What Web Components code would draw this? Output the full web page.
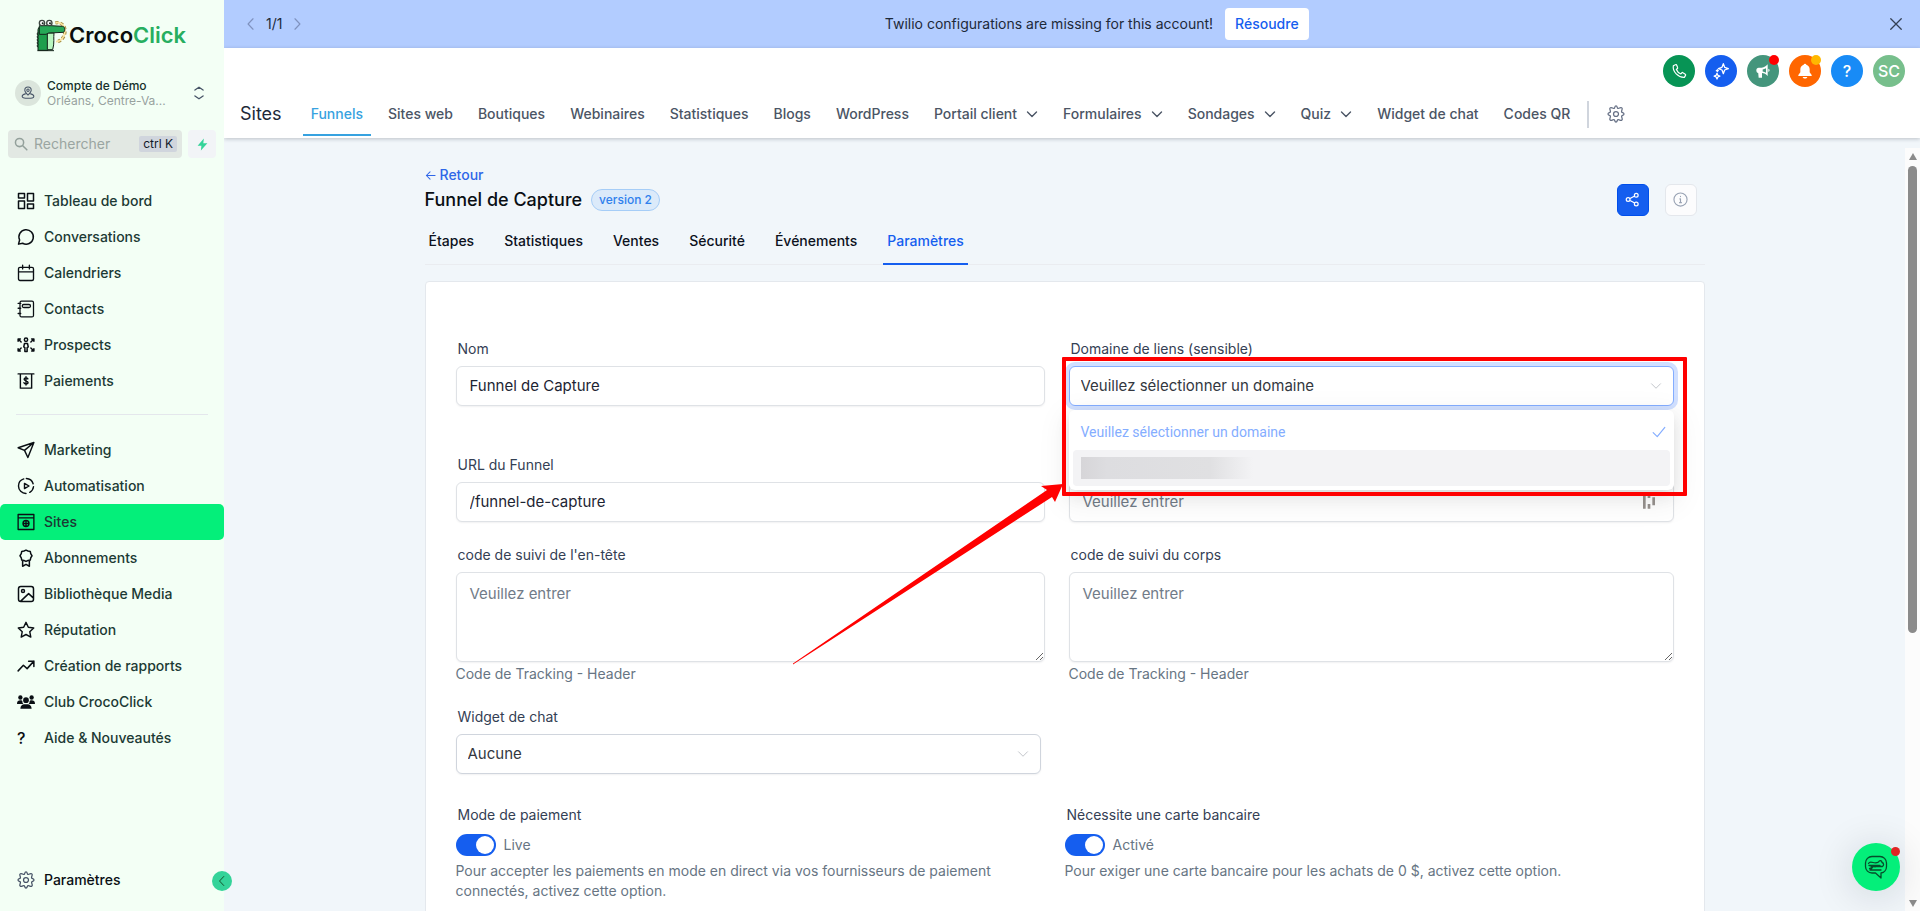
<!DOCTYPE html>
<html lang="fr">
<head>
<meta charset="utf-8">
<meta name="viewport" content="width=device-width, initial-scale=1">
<title>Funnel de Capture</title>
<style>
body {
  margin: 0;
  font-family: Inter, "Open Sans", sans-serif;
  font-size: 14px;
  line-height: 20px;
  color: #101828;
}
</style>
</head>
<body>
<funnel-app></funnel-app>

<script>
var stroke = (d, w = 2) => `<g fill="none" stroke="currentColor" stroke-width="${w}" stroke-linecap="round" stroke-linejoin="round">${d}</g>`;
var path = (d, w) => stroke(`<path d="${d}"/>`, w);

// all on a 24x24 grid
var icons = {
  dashboard: stroke(`<rect x="2" y="2" width="8" height="6"/><rect x="14" y="2" width="8" height="10"/><rect x="2" y="12" width="8" height="10"/><rect x="14" y="16" width="8" height="6"/>`),
  chat: path('M2 21.500l1.500-5.500A9.600 9.600 0 1 1 7.500 20.300z'),
  calendar: path('M4 4.500h16a2 2 0 0 1 2 2V20a2 2 0 0 1-2 2H4a2 2 0 0 1-2-2V6.500a2 2 0 0 1 2-2zM2 10.500h20M7.500 1.500v5M16.500 1.500v5', 1.800),
  contacts: path('M6 1.500h14a2 2 0 0 1 2 2v17a2 2 0 0 1-2 2H6a2 2 0 0 1-2-2v-17a2 2 0 0 1 2-2zM1.500 4.500H5M1.500 11H5M1.500 18H5M9 6h7a1.500 1.500 0 0 1 0 4H9a1.500 1.500 0 0 1 0-4z', 1.700),
  prospects: stroke(`<circle cx="12" cy="5" r="2.200"/><path d="M10 10h4l1 4.500-1.500 1v5h-3v-5l-1.500-1z"/><path d="M1.500 7V4h3M1.500 4l4 4M22.500 7V4h-3M22.500 4l-4 4M1.500 17v3h3M1.500 20l4-4M22.500 17v3h-3M22.500 20l-4-4"/>`, 2),
  payments: path('M1.500 2.500h21M4.500 2.500v19h15v-19M14.500 9.200c-.5-1-1.400-1.400-2.500-1.400-1.500 0-2.500.7-2.500 1.900 0 2.800 5.200 1.300 5.200 4.200 0 1.200-1.100 1.900-2.700 1.900-1.300 0-2.300-.5-2.700-1.500M12 6.300v11', 1.900),
  send: path('M22.500 2L10 12.500M22.500 2l-8 20-4.500-9.500L1.500 9z', 1.900),
  automation: path('M9 2.500A10 10 0 0 0 2 12a10 10 0 0 0 10 10M12.500 2a10 10 0 0 1 9 7M22 13a10 10 0 0 1-5 7.500M10 8.500v7l6-3.500z', 1.900),
  sites: path('M1.500 2h21v20h-21zM1.500 6.500h21M12 10a4 4 0 1 1 0 8 4 4 0 0 1 0-8zM8 14h8M12 10v8', 1.800),
  award: path('M12 1.500l2.700 1.200 3 .6.600 3L20 9l-1.700 2.700-.6 3-3 .6L12 16.500l-2.700-1.200-3-.6-.6-3L4 9l1.700-2.700.6-3 3-.6zM7.500 15.500V23l4.500-2.500 4.500 2.500v-7.500', 2),
  image: path('M5 2h14a3 3 0 0 1 3 3v14a3 3 0 0 1-3 3H5a3 3 0 0 1-3-3V5a3 3 0 0 1 3-3zM8 6a2 2 0 1 1 0 4 2 2 0 0 1 0-4zM5 21.500l10.500-10 6.500 6', 2),
  star: path('M12 1.800l3.100 6.600 7.200.9-5.300 5 1.400 7.200L12 18l-6.400 3.500L7 14.300l-5.300-5 7.200-.9z', 1.900),
  trend: path('M1.500 18.500l7-7.500 5 4.500 9-10M15.500 5.500h7v7', 2),
  group: `<g fill="currentColor"><circle cx="12" cy="9.500" r="3.800"/><circle cx="4.500" cy="6" r="2.900"/><circle cx="19.500" cy="6" r="2.900"/><path d="M4.500 21c0-4 2.500-6 5-6h5c2.500 0 5 2 5 6zM0 14.500C0 11 2 9.800 4.500 9.800c1 0 1.900.2 2.600.7-.1 1.600.4 2.900 1.400 4zM24 14.500c0-3.500-2-4.700-4.500-4.700-1 0-1.900.2-2.600.7.1 1.600-.4 2.900-1.400 4z"/></g>`,
  gear: path('M12 8.700a3.300 3.300 0 1 1 0 6.600 3.300 3.300 0 0 1 0-6.600zM9.900 4.300c.5-1.500.8-3 2.100-3s1.600 1.500 2.100 3c1.300.5 1.600.3 3-.4 1.200-.6 2-.8 2.700-.1s.7 1.600.1 2.800c-.7 1.400-.8 1.800-.3 3 1.600.6 3.100.9 3.100 2.300s-1.500 1.800-3 2.400c-.5 1.200-.4 1.600.3 3 .6 1.200.6 2-.1 2.700s-1.600.7-2.800.1c-1.400-.7-1.700-.8-3-.3-.5 1.500-.8 3-2.100 3s-1.600-1.500-2.100-3c-1.300-.5-1.600-.4-3 .3-1.200.6-2 .6-2.700-.1s-.7-1.500-.1-2.700c.7-1.400.8-1.800.3-3-1.500-.6-3.100-1-3.100-2.400s1.500-1.700 3.100-2.300c.5-1.200.4-1.600-.3-3-.6-1.200-.6-2.100.1-2.800s1.500-.5 2.700.1c1.400.7 1.700.9 3 .4z', 1.700),
  person: path('M12 15.500C8.500 12 6.500 10 6.500 7.200a5.500 5.500 0 0 1 11 0c0 2.800-2 4.800-5.500 8.300zM12 5.300a2 2 0 1 1 0 4 2 2 0 0 1 0-4zM7.500 13.500C4 14.200 2 15.800 2 18c0 2.500 3.500 3 10 3s10-.5 10-3c0-2.200-2-3.800-5.500-4.500', 1.800),
  updown: path('M5 7l7-5 7 5M5 17l7 5 7-5', 2.200),
  search: stroke(`<circle cx="9.500" cy="9.500" r="7"/><path d="M15 15l7 7"/>`, 2.600),
  bolt: `<path fill="currentColor" d="M14.500 1L3 14.500h7L9 23l12-13.500h-7.500z"/>`,
  left: path('M15.500 3L7 12l8.500 9'),
  right: path('M8.500 3l8.500 9-8.500 9'),
  down: path('M3 8l9 9 9-9', 2.800),
  thindown: path('M3 7.500l9 9 9-9', 1.600),
  close: path('M3 3l18 18M21 3L3 21', 2.200),
  back: path('M22 12H3M11 4l-8 8 8 8', 2.200),
  check: path('M2 13l7 7L22 4', 2),
  phone: path('M6.500 2.500L3.500 4c-1.500 9 7.500 18 16.500 17.500l1.800-3c.4-.7.2-1.400-.4-1.800l-3.500-2.200c-.6-.4-1.300-.3-1.700.2l-1.400 1.700C12 15.200 9 12.200 8 9.700L9.600 8.200c.5-.4.600-1 .3-1.600L8.400 3c-.3-.7-1.200-.9-1.900-.5z', 1.800),
  sparkle: path('M15.500 1l2 5.500L23 8.500l-5.500 2-2 5.500-2-5.500L8 8.500l5.500-2zM6.500 10v3M5 11.500h3M6 15.500l1.300 3 3 1.300-3 1.200L6 24l-1.300-3-3-1.200 3-1.300z', 1.900),
  horn: `<path fill="currentColor" fill-rule="evenodd" d="M19 2v17.500c-2.500-3-5-4.300-8.500-4.500V22H5.500l-.7-7C3 14.800 2 13.500 2 11s1.300-4 3.500-4H10c4-.2 6.500-2 9-5zM16.500 8c-1.700 1-3.500 1.700-5 1.900v2.700c1.700.2 3.400.9 5 1.900zM20 8.500a2.600 2.600 0 0 1 0 5z"/>`,
  bell: `<path fill="currentColor" d="M12 1a2 2 0 0 0-2 1.500C7 3.300 5 6 5 9.500V14l-3 4v1.500h20V18l-3-4V9.500c0-3.500-2-6.200-5-7A2 2 0 0 0 12 1zM8.500 21c.5 1.500 2 2.300 3.500 2.300s3-.8 3.500-2.300z"/>`,
  share: path('M18 2a3 3 0 1 1 0 6 3 3 0 0 1 0-6zM5 9a3 3 0 1 1 0 6 3 3 0 0 1 0-6zM18 16a3 3 0 1 1 0 6 3 3 0 0 1 0-6zM8 10.500L15.500 6.500M8 13.500l7.500 4'),
  info: path('M12 1.500a10.500 10.500 0 1 1 0 21 10.500 10.500 0 0 1 0-21zM12 11v6M11 11h1M10.500 17h3M12 7v.3', 1.800),
  bars: `<path fill="currentColor" d="M3 2h4v20H3zM10 2h4v4h-4zM10 15h4v7h-4zM17 5h4v12h-4z"/>`,
  croco: path('M8 1.500h8A6.500 6.500 0 0 1 22.500 8v3.500A6.500 6.500 0 0 1 17 18v5l-5.500-5H8a6.500 6.500 0 0 1-6.500-6.500V8A6.500 6.500 0 0 1 8 1.500zM4.500 8.500c1-2 3-1.500 4.500-1 1.500.5 4 .5 5.500-.5 1-2 3.500-1.500 3.500.5 2 .5 2 3 .5 4H9l-1.500 2H5.500M5 10.500h11M7 12l1-1.500 1 1.500 1-1.500 1 1.500M6 15h11', 1.300)
};

var define = (name, css, html, setup) => {
  let template = document.createElement("template");
  template.innerHTML = `<style>*{box-sizing:border-box}${css}</style>${html}`;
  customElements.define(name, class extends HTMLElement {
    constructor() {
      super();
      this.attachShadow({ mode: 'open' }).appendChild(template.content.cloneNode(true));
    }
    connectedCallback() {
      if (setup) setup(this, (s) => this.shadowRoot.querySelector(s));
    }
  });
};

define('app-icon', `
:host { display: block; flex: none; width: var(--size, 18px); height: var(--size, 18px); }
svg { display: block; width: 100%; height: 100%; overflow: visible; }
`, `<svg viewBox="0 0 24 24" aria-hidden="true"></svg>`, (el, $) => {
  $('svg').innerHTML = icons[el.getAttribute('name')];
});

/* sidebar */

define('side-link', `
:host { display: block; }
a {
  display: flex;
  align-items: center;
  gap: 9px;
  height: 36px;
  padding: 0 17px;
  border-radius: 5px;
  color: #1c3a34;
  font-size: 14px;
  font-weight: 500;
  text-decoration: none;
}
:host([active]) a { background: #04ef7a; }
:host([plain]) a { color: #0a0f14; }
:host([plain]) app-icon { color: #475467; }
app-icon { color: #0a0f14; }
.mark { width: 18px; font-size: 16px; color: #0a0f14; }
`, `<a href="#"><slot name="icon"></slot><slot></slot></a>`, (el, $) => {
  if (el.hasAttribute('icon')) $('slot').outerHTML = `<app-icon name="${el.getAttribute('icon')}"></app-icon>`;
  else $('slot').outerHTML = `<span class="mark">?</span>`;
});

define('croco-logo', `
:host { display: flex; align-items: center; gap: 1px; height: 36px; font-size: 22px; font-weight: 600; line-height: 28px; color: #0b0f0d; }
svg { width: 32px; height: 34px; }
span { color: #27ae60; }
`, `
<svg viewBox="0 0 96 100" aria-hidden="true">
  <g fill="none">
    <path d="M58 14c16-5 29 8 29 24S76 70 60 70" stroke="#a08a3c" stroke-width="10" stroke-dasharray="9 6"/>
    <path d="M58 14c16-5 29 8 29 24S76 70 60 70" stroke="#fbe3a0" stroke-width="5"/>
  </g>
  <path d="M8 28h42l-2 16H36v52H6V34z" fill="#1e9e4c" stroke="#14241b" stroke-width="3"/>
  <path d="M34 44h20c-2 14 2 30-4 50H34z" fill="#b9f7c0" stroke="#14241b" stroke-width="3"/>
  <path d="M10 22h34l36 2c8 1 8 16 2 18l-44 2-8 4H10z" fill="#27a857" stroke="#14241b" stroke-width="3"/>
  <circle cx="18" cy="14" r="8" fill="#fff" stroke="#3c4540" stroke-width="4"/>
  <circle cx="40" cy="14" r="8" fill="#fff" stroke="#3c4540" stroke-width="4"/>
  <circle cx="20" cy="15" r="3" fill="#14241b"/>
  <circle cx="42" cy="15" r="3" fill="#14241b"/>
  <path d="M6 42l-3 5 3 4-3 5 3 4-3 5 3 4-3 5 3 4-3 5 3 4M4 97h50" fill="none" stroke="#14241b" stroke-width="3"/>
</svg>
<div>Croco<span>Click</span></div>`);

define('side-bar', `
:host {
  position: relative;
  display: flex;
  flex-direction: column;
  min-width: 0;
  background: #f3fff5;
}
croco-logo { margin: 17px 0 0 36px; }
.account {
  display: flex;
  align-items: center;
  gap: 6px;
  margin: 24px 18px 0 15px;
  height: 32px;
  padding: 0;
  border: 0;
  background: none;
  font: inherit;
  text-align: left;
  color: #16302b;
}
.avatar { display: grid; place-items: center; width: 26px; height: 26px; border-radius: 50%; background: #dbe5dc; color: #475467; --size: 14px; }
.who { flex: 1; min-width: 0; font-size: 12px; line-height: 15px; font-weight: 500; }
.who small { display: block; white-space: nowrap; font-size: 12px; font-weight: 400; color: #98a29f; }
.account > app-icon { --size: 14px; color: #475467; }
.find { display: flex; gap: 6px; margin: 21px 8px 25px; }
.box { flex: 1; min-width: 0; display: flex; align-items: center; gap: 6px; height: 28px; padding: 0 5px 0 6px; border-radius: 4px; background: #e2e8e3; color: #93a09b; --size: 14px; }
input { flex: 1; width: 0; min-width: 0; padding: 0; border: 0; outline: 0; background: none; font: inherit; }
input::placeholder { color: #9aa5a1; }
kbd { flex: none; padding: 0 4px; border-radius: 2px; background: #d0d5dd; color: #101828; font: 12px/16px Inter, sans-serif; }
.bolt { flex: none; display: grid; place-items: center; width: 28px; height: 28px; padding: 0; border: 0; border-radius: 4px; background: #f2f4f7; color: #34d399; --size: 13px; }
hr { width: 192px; margin: 15px auto 17px; border: 0; border-top: 1px solid #e4e7ec; }
.last { margin-top: auto; padding-bottom: 13px; }
.fold {
  position: absolute;
  right: -8px;
  bottom: 20px;
  display: grid;
  place-items: center;
  width: 20px;
  height: 20px;
  padding: 0;
  border: 0;
  border-radius: 50%;
  background: #34d399;
  color: #14532d;
  --size: 12px;
}
`, `
<croco-logo></croco-logo>
<button class="account" type="button">
  <span class="avatar"><app-icon name="person"></app-icon></span>
  <span class="who">Compte de Démo<small>Orléans, Centre-Va...</small></span>
  <app-icon name="updown"></app-icon>
</button>
<div class="find">
  <label class="box"><app-icon name="search"></app-icon><input type="text" placeholder="Rechercher" aria-label="Rechercher"><kbd>ctrl K</kbd></label>
  <button class="bolt" type="button" aria-label="Actions rapides"><app-icon name="bolt"></app-icon></button>
</div>
<nav>
  <side-link icon="dashboard">Tableau de bord</side-link>
  <side-link icon="chat">Conversations</side-link>
  <side-link icon="calendar">Calendriers</side-link>
  <side-link icon="contacts">Contacts</side-link>
  <side-link icon="prospects">Prospects</side-link>
  <side-link icon="payments">Paiements</side-link>
  <hr>
  <side-link icon="send">Marketing</side-link>
  <side-link icon="automation">Automatisation</side-link>
  <side-link icon="sites" active>Sites</side-link>
  <side-link icon="award">Abonnements</side-link>
  <side-link icon="image">Bibliothèque Media</side-link>
  <side-link icon="star">Réputation</side-link>
  <side-link icon="trend">Création de rapports</side-link>
  <side-link icon="group">Club CrocoClick</side-link>
  <side-link>Aide &amp; Nouveautés</side-link>
</nav>
<div class="last"><side-link icon="gear" plain>Paramètres</side-link></div>
<button class="fold" type="button" aria-label="Réduire le menu"><app-icon name="left"></app-icon></button>
`);

/* header */

define('alert-banner', `
:host { display: flex; align-items: center; height: 48px; padding: 0 17px 0 20px; background: #b2ccff; color: #1d2939; }
.pager { display: flex; align-items: center; gap: 8px; }
.pager button { color: #7f92bf; }
.message { display: flex; align-items: center; gap: 12px; margin: 0 auto; }
a { padding: 6px 10px; border-radius: 4px; background: #fff; color: #155eef; font-weight: 500; text-decoration: none; }
button { display: block; padding: 0; border: 0; background: none; --size: 14px; }
.close { color: #344054; }
`, `
<div class="pager">
  <button type="button" aria-label="Précédent"><app-icon name="left"></app-icon></button>
  <span>1/1</span>
  <button type="button" aria-label="Suivant"><app-icon name="right"></app-icon></button>
</div>
<div class="message"><slot></slot><a href="#">Résoudre</a></div>
<button class="close" type="button" aria-label="Fermer"><app-icon name="close"></app-icon></button>
`);

define('round-button', `
:host { position: relative; display: block; }
button { display: grid; place-items: center; width: 32px; height: 32px; padding: 0; border: 0; border-radius: 50%; background: var(--tone); color: #fff; font: 500 16px/20px Inter, sans-serif; --size: 16px; }
i { position: absolute; top: 0; right: 0; width: 10px; height: 10px; border-radius: 50%; background: var(--dot, transparent); }
`, `<button type="button"><slot></slot></button><i></i>`, (el, $) => {
  $('button').setAttribute('aria-label', el.getAttribute('label'));
});

define('top-link', `
:host { display: block; }
a { display: flex; align-items: center; gap: 9px; height: 44px; padding: 2px 8px 0; border-bottom: 2px solid transparent; color: #4b5565; font-weight: 500; text-decoration: none; white-space: nowrap; --size: 12px; }
:host([active]) a { border-color: #37a2e0; color: #37a2e0; }
`, `<a href="#"><slot></slot></a>`, (el, $) => {
  if (el.hasAttribute('menu')) $('a').insertAdjacentHTML('beforeend', `<app-icon name="down"></app-icon>`);
});

define('top-bar', `
:host { position: relative; z-index: 1; display: block; background: #fff; box-shadow: 0 1px 4px rgba(16, 24, 40, .24); }
.tools { display: flex; justify-content: flex-end; gap: 10px; padding: 7px 15px 0; }
nav { display: flex; align-items: center; gap: 9px; padding: 5px 16px 2px; height: 51px; }
h1 { margin: 0 12px 0 0; font-size: 18px; font-weight: 400; line-height: 24px; color: #1d2939; }
.rule { width: 2px; height: 27px; background: #d0d5dd; margin: 0 9px 0 0; }
.set { padding: 0; border: 0; background: none; color: #667085; }
`, `
<div class="tools">
  <round-button label="Téléphone" style="--tone:#079455"><app-icon name="phone"></app-icon></round-button>
  <round-button label="Assistant" style="--tone:#155eef"><app-icon name="sparkle"></app-icon></round-button>
  <round-button label="Annonces" style="--tone:#44957c;--dot:#f00"><app-icon name="horn"></app-icon></round-button>
  <round-button label="Notifications" style="--tone:#ff6600;--dot:#ffb800"><app-icon name="bell"></app-icon></round-button>
  <round-button label="Aide" style="--tone:#188bf6">?</round-button>
  <round-button label="Profil" style="--tone:#77bf8c">SC</round-button>
</div>
<nav>
  <h1>Sites</h1>
  <top-link active>Funnels</top-link>
  <top-link>Sites web</top-link>
  <top-link>Boutiques</top-link>
  <top-link>Webinaires</top-link>
  <top-link>Statistiques</top-link>
  <top-link>Blogs</top-link>
  <top-link>WordPress</top-link>
  <top-link menu>Portail client</top-link>
  <top-link menu>Formulaires</top-link>
  <top-link menu>Sondages</top-link>
  <top-link menu>Quiz</top-link>
  <top-link>Widget de chat</top-link>
  <top-link>Codes QR</top-link>
  <span class="rule"></span>
  <button class="set" type="button" aria-label="Réglages"><app-icon name="gear"></app-icon></button>
</nav>
`);

/* page */

define('page-head', `
:host { display: block; padding-top: 17px; }
.back { display: inline-flex; align-items: center; gap: 4px; color: #2f66e8; font-weight: 500; text-decoration: none; --size: 11px; }
.row { display: flex; align-items: center; gap: 16px; height: 32px; margin-top: -2px; padding-right: 8px; }
h2 { margin: 0; font-size: 18px; font-weight: 500; line-height: 24px; color: #0a0f14; }
.tag { margin: 0 auto 0 -7px; padding: 0 7px; border: 1px solid #a6cdf7; border-radius: 11px; background: #dbeafa; color: #2f80ed; font-size: 12px; font-weight: 500; }
button { display: grid; place-items: center; width: 32px; height: 32px; padding: 0; border: 1px solid #e4e7ec; border-radius: 6px; background: #fcfcfd; color: #98a2b3; --size: 15px; }
.share { border-color: #004eeb; background: #155eef; color: #fff; }
.tabs { display: flex; gap: 22px; margin-top: 5px; border-bottom: 1px solid #eaecf0; }
.tabs a { margin-bottom: -1px; padding: 10px 4px 12px; border-bottom: 2px solid transparent; color: #0c111d; font-weight: 500; text-decoration: none; }
.tabs a.on { border-color: #155eef; color: #155eef; }
`, `
<a class="back" href="#"><app-icon name="back"></app-icon>Retour</a>
<div class="row">
  <h2>Funnel de Capture</h2>
  <span class="tag">version 2</span>
  <button class="share" type="button" aria-label="Partager"><app-icon name="share"></app-icon></button>
  <button type="button" aria-label="Informations"><app-icon name="info"></app-icon></button>
</div>
<nav class="tabs">
  <a href="#">Étapes</a><a href="#">Statistiques</a><a href="#">Ventes</a><a href="#">Sécurité</a><a href="#">Événements</a><a class="on" href="#">Paramètres</a>
</nav>
`);

var fieldCss = `
:host { position: relative; display: block; }
label { display: block; margin: 0 0 8px 2px; font-size: 14px; line-height: 18px; color: #344054; }
input, textarea, select {
  display: block;
  width: 100%;
  height: 40px;
  margin: 0;
  padding: 0 13px;
  border: 1px solid #dfe2e6;
  border-radius: 6px;
  outline: 0;
  background: #fff;
  box-shadow: 0 1px 2px rgba(16, 24, 40, .06);
  font: 15px/20px Inter, sans-serif;
  color: #1d2433;
}
textarea { height: 90px; padding: 11px 13px; }
::placeholder { color: #717b88; opacity: 1; }
p { margin: 2px 0 0; line-height: 20px; color: #677583; }
`;

define('text-field', `${fieldCss}
app-icon { position: absolute; right: 17px; bottom: 12px; --size: 16px; color: #98938f; }
`, `<label for="f"><slot></slot></label>`, (el, $) => {
  let tag = el.hasAttribute('area') ? 'textarea' : 'input';
  let field = document.createElement(tag);
  field.id = 'f';
  field.placeholder = 'Veuillez entrer';
  if (tag === 'input') {
    field.type = 'text';
    field.value = el.getAttribute('value') ?? '';
  }
  el.shadowRoot.append(field);
  if (el.hasAttribute('hint')) {
    let hint = document.createElement('p');
    hint.textContent = el.getAttribute('hint');
    el.shadowRoot.append(hint);
  }
  if (el.hasAttribute('bars')) field.insertAdjacentHTML('afterend', `<app-icon name="bars"></app-icon>`);
});

define('select-field', `${fieldCss}
.wrap { position: relative; }
.wrap > app-icon { position: absolute; right: 12px; top: 14px; --size: 12px; color: #b4b8be; pointer-events: none; }
select { appearance: none; padding: 0 11px; border-color: #d0d5dd; color: #333740; }
:host([open]) { z-index: 2; }
:host([open]) select { border-color: #84adff; box-shadow: 0 0 0 4px #d1e0ff; }
`, `<label for="f"></label><div class="wrap"><select id="f"><option></option></select><app-icon name="thindown"></app-icon><slot></slot></div>`, (el, $) => {
  $('label').textContent = el.getAttribute('label');
  $('option').textContent = el.getAttribute('value');
});

define('option-menu', `
:host {
  position: absolute;
  top: 44px;
  left: 0;
  right: 0;
  padding: 4px;
  border-radius: 6px;
  background: #fff;
  box-shadow: 0 3px 6px -4px rgba(0, 0, 0, .12), 0 6px 16px rgba(0, 0, 0, .08), 0 9px 28px 8px rgba(0, 0, 0, .05);
  font: 14px/20px Roboto, sans-serif;
}
div { display: flex; align-items: center; justify-content: space-between; height: 36px; padding: 0 4px 0 8px; border-radius: 4px; color: #84adff; --size: 14px; }
.hover { background: #f3f3f5; }
.hidden { width: 172px; height: 22px; background: linear-gradient(90deg, #d6d5d8, #dddde0 15%, #e0e0e2 75%, #f3f3f5); }
`, `
<div role="option" aria-selected="true">Veuillez sélectionner un domaine<app-icon name="check"></app-icon></div>
<div class="hover" role="option"><span class="hidden"></span></div>
`);

// frame round the domain picker, with its arrow coming in from the lower left
define('red-callout', `
:host { position: absolute; top: -9px; left: -7px; right: -13px; height: 139px; border: 4px solid #f00; border-radius: 1px; pointer-events: none; }
svg { position: absolute; right: 100%; top: 123px; width: 270px; height: 180px; margin-right: 3px; overflow: visible; }
`, `<svg viewBox="0 0 270 180" aria-hidden="true"><path fill="#f00" d="M270 0l-8 18-3-5L0 180.500 0 179.500 254 6l-6-4z"/></svg>`);

define('switch-field', `
:host { display: block; }
label { display: block; line-height: 18px; color: #344054; }
.name { margin: 0 0 10px 2px; }
.line { display: flex; align-items: center; gap: 8px; height: 22px; }
.line label { color: #677583; }
input { appearance: none; width: 40px; height: 22px; margin: 0; padding: 2px; border-radius: 11px; background: #155eef; }
input::before { content: ""; display: block; width: 18px; height: 18px; margin-left: 18px; border-radius: 50%; background: #fff; }
p { margin: 5px 0 0; line-height: 20px; color: #677583; }
`, `
<label class="name" for="s"><slot></slot></label>
<div class="line"><input id="s" type="checkbox" role="switch" checked><label class="state" for="s"></label></div>
<p></p>
`, (el, $) => {
  $('.state').textContent = el.getAttribute('state');
  $('p').textContent = el.getAttribute('hint');
});

define('settings-card', `
:host { display: block; margin-top: 16px; padding: 58px 30px 40px; border: 1px solid #e4e8ed; border-radius: 4px; background: #fff; }
form { display: grid; grid-template-columns: 589fr 605fr; gap: 24px; }
.wide { padding-bottom: 26px; }
.half { grid-column: 1 / -1; display: grid; grid-template-columns: 585fr 609fr; gap: 24px; }
.next { margin-top: 8px; }
`, `
<form>
  <text-field class="wide" value="Funnel de Capture">Nom</text-field>
  <select-field class="wide" label="Domaine de liens (sensible)" value="Veuillez sélectionner un domaine" open>
    <option-menu></option-menu>
    <red-callout></red-callout>
  </select-field>
  <text-field value="/funnel-de-capture">URL du Funnel</text-field>
  <text-field bars>Favicon URL</text-field>
  <text-field area hint="Code de Tracking - Header">code de suivi de l'en-tête</text-field>
  <text-field area hint="Code de Tracking - Header">code de suivi du corps</text-field>
  <div class="half"><select-field label="Widget de chat" value="Aucune"></select-field></div>
  <div class="half next">
    <switch-field state="Live" hint="Pour accepter les paiements en mode en direct via vos fournisseurs de paiement connectés, activez cette option.">Mode de paiement</switch-field>
    <switch-field state="Activé" hint="Pour exiger une carte bancaire pour les achats de 0 $, activez cette option.">Nécessite une carte bancaire</switch-field>
  </div>
</form>
`);

define('scroll-rail', `
:host { display: flex; flex-direction: column; align-items: center; gap: 6px; width: 15px; margin-top: 10px; padding: 5px 0 4px; background: #fcfcfc; }
i { width: 0; border: 4px solid transparent; border-top: 0; border-bottom: 7px solid #8b8b8b; }
i:last-child { margin-top: auto; transform: rotate(180deg); }
b { width: 9px; height: 62%; border-radius: 5px; background: #8b8b8b; }
`, `<i></i><b></b><i></i>`);

define('chat-bubble', `
:host { position: fixed; right: 20px; bottom: 20px; z-index: 3; }
button { display: grid; place-items: center; width: 48px; height: 48px; padding: 0; border: 0; border-radius: 50%; background: #04ef7a; box-shadow: 0 4px 40px rgba(16, 24, 40, .16); color: #064e2b; --size: 24px; }
i { position: absolute; top: 4px; right: 0; width: 9px; height: 9px; border-radius: 50%; background: #e02424; }
`, `<button type="button" aria-label="Ouvrir la discussion"><app-icon name="croco"></app-icon></button><i></i>`);

define('funnel-app', `
:host { display: grid; grid-template-columns: 224px 1fr; height: 100vh; min-height: 780px; overflow: hidden; background: #f1f6fa; }
side-bar { z-index: 2; }
.main { display: flex; flex-direction: column; min-width: 0; min-height: 0; }
.view { flex: 1; display: flex; min-height: 0; }
main { flex: 1; min-width: 0; overflow: hidden; padding: 10px 24px 0; }
section { max-width: 1280px; margin: 0 auto; }
`, `
<side-bar></side-bar>
<div class="main">
  <alert-banner>Twilio configurations are missing for this account!</alert-banner>
  <top-bar></top-bar>
  <div class="view">
    <main><section><page-head></page-head><settings-card></settings-card></section></main>
    <scroll-rail></scroll-rail>
  </div>
</div>
<chat-bubble></chat-bubble>
`);
</script>
</body>
</html>
